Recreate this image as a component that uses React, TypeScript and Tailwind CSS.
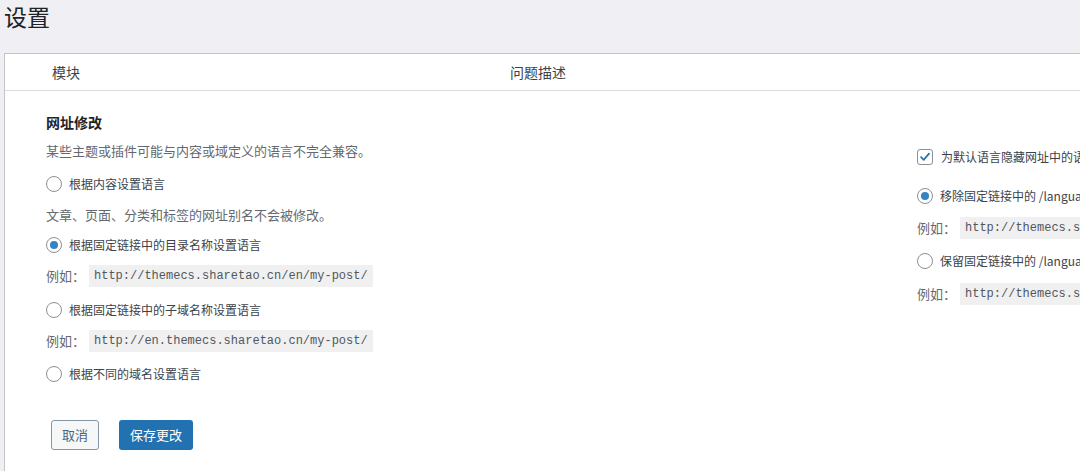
import React from "react";

const Radio = ({ checked = false }: { checked?: boolean }) => (
  <span className="flex h-4 w-4 shrink-0 items-center justify-center rounded-full border border-[#8c8f94] bg-white">
    {checked && <span className="h-2 w-2 rounded-full bg-[#3582c4]" />}
  </span>
);

const Option = ({ label, checked = false, className = "" }: { label: string; checked?: boolean; className?: string }) => (
  <div className={"flex h-5 items-center gap-[7px] whitespace-nowrap text-[12px] text-[#3c434a] " + className}>
    <Radio checked={checked} />
    <span>{label}</span>
  </div>
);

const Example = ({ url, className = "" }: { url: string; className?: string }) => (
  <div className={"flex h-[22px] items-center whitespace-nowrap " + className}>
    <span className="w-[43px] shrink-0 text-[13px] text-[#646970]">例如：</span>
    <code className="flex h-[22px] items-center bg-[#f0f0f1] px-[5px] font-['Liberation_Mono',monospace] text-[12px] text-[#50575e]">
      {url}
    </code>
  </div>
);

export default function App() {
  return (
    <div className="h-[471px] w-[1080px] overflow-hidden bg-[#f0eff3] font-['Noto_Sans_CJK_SC','Noto_Sans',sans-serif] text-[#1d2327]">
      <h1 className="h-[53px] pl-[4px] pt-[2px] text-[23px] leading-[28px] font-normal">设置</h1>

      <div className="ml-[4px] h-[418px] border-l border-t border-[#c3c4c7] bg-white">
        {/* table header */}
        <div className="flex h-[37px] items-center border-b border-[#dcdcde] text-[14px] text-[#3c434a]">
          <span className="w-[505px] pl-[47px]">模块</span>
          <span>问题描述</span>
        </div>

        <div className="flex pl-[41px]">
          {/* left column */}
          <div className="w-[871px] shrink-0">
            <h2 className="mt-[21px] h-5 text-[14px] font-bold leading-5 text-[#1d2327]">网址修改</h2>
            <p className="mt-[9px] h-5 text-[13px] leading-5 text-[#646970]">某些主题或插件可能与内容或域定义的语言不完全兼容。</p>
            <Option className="mt-[13px]" label="根据内容设置语言" />
            <p className="mt-[11px] h-5 text-[13px] leading-5 text-[#646970]">文章、页面、分类和标签的网址别名不会被修改。</p>
            <Option className="mt-[10px]" label="根据固定链接中的目录名称设置语言" checked />
            <Example className="mt-[10px]" url="http://themecs.sharetao.cn/en/my-post/" />
            <Option className="mt-[13px]" label="根据固定链接中的子域名称设置语言" />
            <Example className="mt-[10px]" url="http://en.themecs.sharetao.cn/my-post/" />
            <Option className="mt-[12px]" label="根据不同的域名设置语言" />

            <div className="ml-[5px] mt-[36px] flex gap-5">
              <button className="h-[30px] w-[48px] rounded-[3px] border border-[#8796a6] bg-[#f6f7f7] text-[13px] text-[#4a6580]">取消</button>
              <button className="h-[30px] w-[74px] rounded-[3px] bg-[#2271b1] text-[13px] text-white">保存更改</button>
            </div>
          </div>

          {/* right column */}
          <div className="min-w-0 flex-1">
            <div className="mt-[56px] flex h-5 items-center gap-[8px] whitespace-nowrap text-[12px] text-[#3c434a]">
              <span className="flex h-4 w-4 shrink-0 items-center justify-center rounded-[3px] border border-[#8c8f94] bg-white">
                <svg viewBox="0 0 16 16" className="h-[14px] w-[14px]">
                  <path d="M3.5 8.2 L6.6 11.2 L12.6 4.2" fill="none" stroke="#2271b1" strokeWidth="2" strokeLinecap="round" strokeLinejoin="round" />
                </svg>
              </span>
              <span>为默认语言隐藏网址中的语言代码</span>
            </div>
            <Option className="mt-[19px]" label="移除固定链接中的 /language/" checked />
            <Example className="mt-[11px]" url="http://themecs.sharetao.cn/en/my-post/" />
            <Option className="mt-[12px]" label="保留固定链接中的 /language/" />
            <Example className="mt-[12px]" url="http://themecs.sharetao.cn/language/en/my-post/" />
          </div>
        </div>
      </div>
    </div>
  );
}
